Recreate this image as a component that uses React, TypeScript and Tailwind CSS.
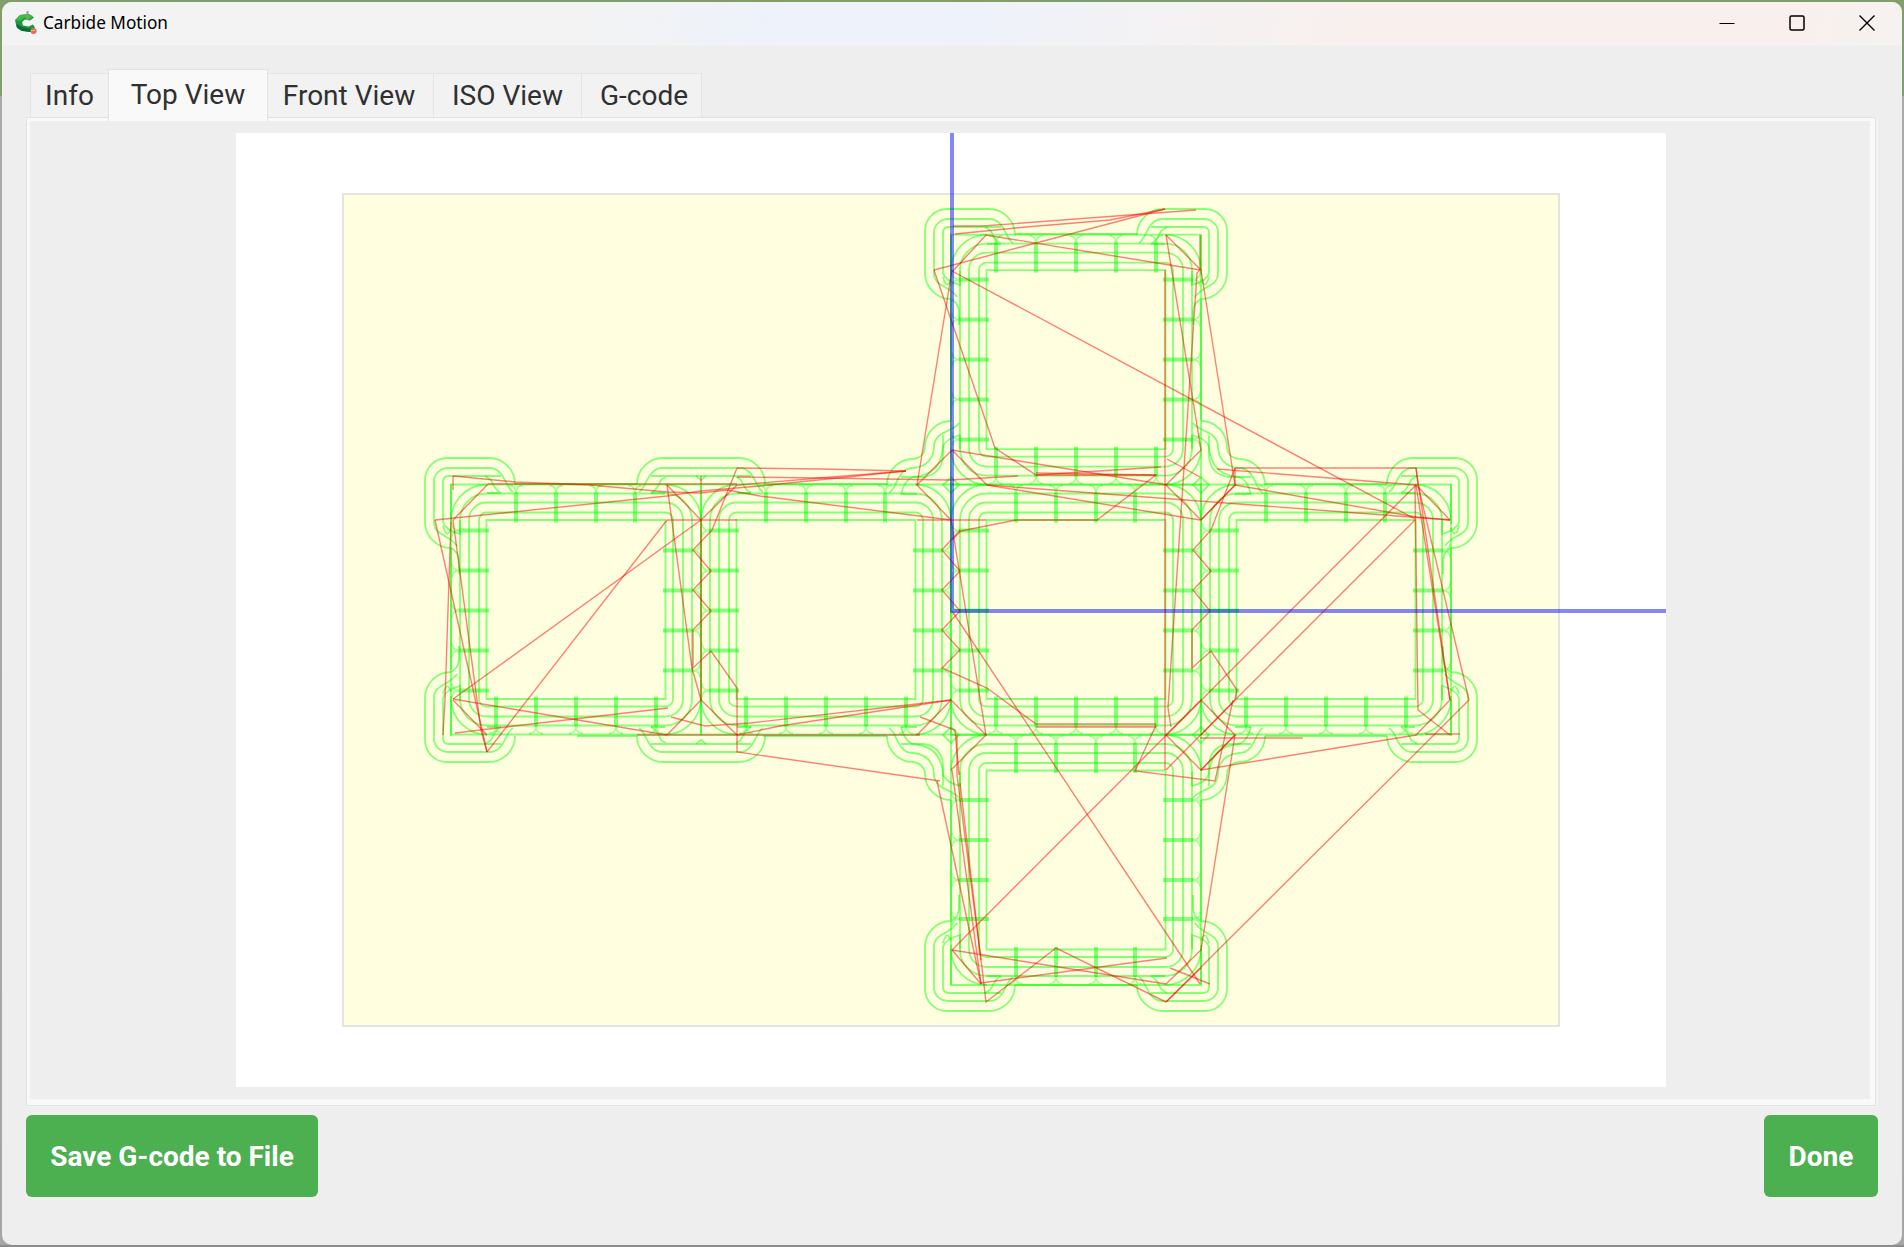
import React from "react";

const GREEN = "#00ff00";
const RED = "#ff0000";
const U = 250;

type Square = { x: number; y: number; top: number[]; right: number[]; bottom: number[]; left: number[] };

const FOUR = [65, 105, 145, 184];
const FIVE = [45, 85, 125, 165, 205];
const SIDE_FOUR = [66, 106, 146, 186];
const SIDE_FIVE = [46, 86, 126, 166, 206];

const squares: Square[] = [
  { x: 951, y: 234.6, top: FIVE, left: FIVE, right: FIVE, bottom: FIVE },
  { x: 451, y: 484.5, top: FOUR, left: SIDE_FIVE, right: SIDE_FOUR, bottom: FIVE },
  { x: 701, y: 484.5, top: FOUR, left: SIDE_FIVE, right: SIDE_FOUR, bottom: FIVE },
  { x: 951, y: 484.5, top: FOUR, left: SIDE_FIVE, right: SIDE_FOUR, bottom: FIVE },
  { x: 1201, y: 484.5, top: FOUR, left: SIDE_FIVE, right: SIDE_FOUR, bottom: FIVE },
  { x: 951, y: 735, top: FOUR, left: FOUR, right: FOUR, bottom: FOUR },
];

const RINGS = [35.5, 28, 18, 9];

function ring(o: number): string {
  const r = 35.5 - o;
  const a = o;
  const b = U - o;
  if (r === 0) return `M${a} ${a}H${b}V${b}H${a}Z`;
  return `M${a + r} ${a}H${b - r}A${r} ${r} 0 0 1 ${b} ${a + r}V${b - r}A${r} ${r} 0 0 1 ${b - r} ${b}H${a + r}A${r} ${r} 0 0 1 ${a} ${b - r}V${a + r}A${r} ${r} 0 0 1 ${a + r} ${a}Z`;
}

const CORNER_ARCS = `M0 36A36 36 0 0 1 36 0M${U - 36} 0A36 36 0 0 1 ${U} 36M${U} ${U - 36}A36 36 0 0 1 ${U - 36} ${U}M36 ${U}A36 36 0 0 1 0 ${U - 36}`;

function Ticks({ at, transform }: { at: number[]; transform?: string }) {
  return (
    <g transform={transform}>
      {at.map((t) => (
        <g key={t}>
          <path d={`M${t} 8V38`} strokeWidth={4} />
          <path d={`M${t - 7} 1Q${t} 1 ${t} 9Q${t} 1 ${t + 7} 1`} strokeOpacity={0.35} />
        </g>
      ))}
    </g>
  );
}

const CONVEX = [
  "M64 0A26 26 0 0 0 38 -26H-4A22 22 0 0 0 -26 -4V38A26 26 0 0 0 0 64L3 66Q8 70 8 78V90",
  "M62 8C54 4 54 -16 38 -16H-3A14 14 0 0 0 -17 -4V38C-17 52 -2 50 6 62",
  "M50 -8H-2Q-8 -8 -8 -2V38Q-6 46 9 50V36",
  "M36 9H50Q44 6 40 -4L34 -8",
  "M-8 42Q-4 56 0 44M0 0V40",
];
const TEE = [
  "M-64 0A26 26 0 0 1 -38 -26H38A26 26 0 0 1 64 0",
  "M-62 8C-54 4 -54 -16 -38 -16H38C54 -16 54 4 62 8",
  "M-50 -8H50M-50 9Q-44 6 -40 -4L-34 -8M50 9Q44 6 40 -4L34 -8",
  "M-50 9H-36M50 9H36M-5 -8L0 -4L5 -8",
];
const CONCAVE = [
  "M-64 0A26 26 0 0 1 -38 -26Q-27 -27 -26 -38A26 26 0 0 1 0 -64",
  "M-62 8C-54 4 -54 -17 -38 -17Q-18 -19 -17 -38C-17 -54 4 -54 8 -62",
  "M-50 9Q-46 -6 -38 -8Q-10 -10 -8 -38Q-6 -46 9 -50",
  "M-50 9H-34M9 -50V-36M-50 -8H-28Q-10 -10 -8 -28V-50",
];

function Marks({ paths, transform }: { paths: string[]; transform: string }) {
  return (
    <g transform={transform}>
      {paths.map((d, i) => (
        <path key={i} d={d} />
      ))}
    </g>
  );
}

// Rapid moves, as flat lists of x,y pairs in canvas coordinates
const rapids: string[] = [
  // top square
  "953,226 983,226 1196,210",
  "955,234 1026,227 1110,220 1165,209",
  "934,270 1165,209",
  "934,270 995,448 1036,475 1156,475 1097,520 1016,520 961,531 952,540",
  "952,272 986,235 1200,270",
  "952,270 917,485",
  "952,271 1415,519",
  "1166,235 1201,450 1166,485 1201,520 1235,485",
  "1166,235 1201,270 1235,485",
  "1200,235 1200,270 1197,273 1168,708 1171,727",
  "1165,270 1165,770",
  "952,450 917,485 951,520",
  "952,450 987,485 1200,520",
  "952,450 1167,485",
  "987,485 1450,520",
  "1167,459 1200,477",
  "1036,475 1161,467",
  "1036,473 1156,475",
  // left square
  "453,476 515,482 590,485 667,492 701,493 727,490 760,496 951,520",
  "453,476 453,490",
  "435,520 667,496 701,491 760,486 906,471",
  "435,520 487,752",
  "453,520 488,484",
  "453,520 481,730 487,752",
  "451,522 450,550 445,700 443,735",
  "488,484 737,484",
  "667,485 701,520 701,700",
  "667,485 692,668 701,700",
  "667,520 737,520",
  "737,485 701,520 453,699",
  "667,520 487,752",
  "453,699 667,735",
  "453,700 487,735",
  "455,733 668,708",
  "701,700 667,735",
  "701,700 737,735",
  "637,735 920,735",
  "671,717 705,726 750,723 951,700",
  "737,735 780,726 951,700",
  "737,468 712,530 693,550 711,571 693,590 711,611 693,630 693,668 711,651 737,688 737,752 940,781",
  "737,468 822,469 906,471",
  "701,476 701,484",
  "737,485 820,478 906,471",
  "737,477 820,478 950,480 1018,476",
  // centre square
  "960,530 942,550 960,571 942,590 960,611 942,630 960,650 942,668 987,688 1036,724 1156,724",
  "951,520 986,735",
  "917,520 986,520",
  "952,611 1200,984",
  "951,700 917,735",
  "951,700 986,735 951,770",
  "920,717 955,730 959,775",
  "1036,727 1156,727",
  "1156,725 1135,771 1215,781 1233,700",
  // right square
  "1235,468 1416,468 1450,700",
  "1235,468 1211,530 1193,550 1211,571 1193,590 1210,611 1192,630 1192,668 1211,651 1237,690 1235,700 1201,735",
  "1235,468 1235,485 1201,520",
  "1217,469 1416,485 1450,520",
  "1235,485 1416,517 1450,520",
  "1416,468 1418,485 1469,700 1166,1002",
  "1416,485 952,950",
  "1415,520 1235,700 1166,770",
  "1416,485 1450,700",
  "1415,485 1418,710 1450,735",
  "1450,700 1416,735 1201,770",
  "1425,734 1460,734",
  "1166,735 1201,770 1235,735",
  "1201,700 1166,735",
  "1201,700 1235,735 1201,770",
  "1200,738 1303,738",
  // bottom square
  "937,781 981,984",
  "957,735 957,775 981,960",
  "952,770 981,984",
  "960,783 986,1002 1056,948 1166,1002",
  "952,950 981,984",
  "952,950 1166,984",
  "981,983 1167,958",
  "1170,968 1210,984",
  "1166,984 1201,950 1235,735",
  "1166,1002 1201,968",
];

function Toolpath() {
  return (
    <svg className="block h-[954px] w-[1430px]" viewBox="236 133 1430 954" fill="none">
      <rect x={343} y={194} width={1216} height={832} fill="#ffffe0" stroke="#e4e4df" strokeWidth={2} />
      <g stroke={GREEN} strokeOpacity={0.48} strokeWidth={1.8}>
        {squares.map((s, i) => (
          <g key={i} transform={`translate(${s.x} ${s.y})`}>
            {RINGS.map((o) => (
              <path key={o} d={ring(o)} />
            ))}
            <path d={CORNER_ARCS} />
            <path d={`M0 0H${U}V${U}H0Z`} />
            <Ticks at={s.top} />
            <Ticks at={s.left} transform="matrix(0 1 1 0 0 0)" />
            <Ticks at={s.bottom} transform="matrix(1 0 0 -1 0 250)" />
            <Ticks at={s.right} transform="matrix(0 1 -1 0 250 0)" />
          </g>
        ))}
        <path d="M515 484H637M763 484H887M1265 484H1387M577 736H637M763 736H887M1265 736H1387M1015 234H1137M1015 985H1137" />
        <path d="M451 548V670M1451 548V670M951 300V420M1201 300V420M951 800V920M1201 800V920" />
        <Marks paths={CONVEX} transform="translate(451 484)" />
        <Marks paths={CONVEX} transform="translate(451 736) scale(1 -1)" />
        <Marks paths={CONVEX} transform="translate(951 235)" />
        <Marks paths={CONVEX} transform="translate(1201 235) scale(-1 1)" />
        <Marks paths={CONVEX} transform="translate(1451 484) scale(-1 1)" />
        <Marks paths={CONVEX} transform="translate(1451 736) scale(-1 -1)" />
        <Marks paths={CONVEX} transform="translate(951 985) scale(1 -1)" />
        <Marks paths={CONVEX} transform="translate(1201 985) scale(-1 -1)" />
        <Marks paths={TEE} transform="translate(701 484)" />
        <Marks paths={TEE} transform="translate(701 736) scale(1 -1)" />
        <Marks paths={CONCAVE} transform="translate(951 485)" />
        <Marks paths={CONCAVE} transform="translate(1201 485) scale(-1 1)" />
        <Marks paths={CONCAVE} transform="translate(951 736) scale(1 -1)" />
        <Marks paths={CONCAVE} transform="translate(1201 736) scale(-1 -1)" />
        {[
          [951, 485],
          [1201, 485],
          [951, 735],
          [1201, 735],
        ].map(([x, y]) => (
          <path key={`${x}-${y}`} d={`M${x - 8} ${y}L${x} ${y - 8}L${x + 8} ${y}L${x} ${y + 8}Z`} />
        ))}
      </g>
      <g stroke={RED} strokeOpacity={0.5} strokeWidth={1.4}>
        {rapids.map((p, i) => (
          <polyline key={i} points={p} />
        ))}
      </g>
      <path d="M952 133V609" stroke="#0000ff" strokeOpacity={0.48} strokeWidth={4} />
      <path d="M950 611H1666" stroke="#0000ff" strokeOpacity={0.48} strokeWidth={4} />
    </svg>
  );
}

function AppIcon() {
  return (
    <svg className="h-[24px] w-[22px]" viewBox="0 0 22 24" fill="none">
      <path d="M12.5 0V8" stroke="#a3a3a3" strokeWidth={2} />
      <path d="M19 6.5L14 3L5 4L0 9L1.500 16L6 19.500L15 21L20 16.500L18 13.500L13.500 15.500L8 14.500L7 11L10 8.500L15 9.500Z" fill="#159a43" />
      <path d="M18 5L13 3L5 4L1 9L5 10L9 7L15 8Z" fill="#46b83f" />
      <path d="M1.500 13L2 17L7 20L15 21L19 17L15 18L7 16Z" fill="#0b6b35" />
      <path d="M12.500 1V9" stroke="#8da08f" strokeWidth={1.500} />
      <circle cx={18.500} cy={20} r={3} fill="#e8694c" />
      <path d="M16 19.500H20" stroke="#f6b29f" strokeWidth={1} />
    </svg>
  );
}

function TitleBar() {
  return (
    <header className="flex h-[43px] items-center justify-between bg-[linear-gradient(100deg,#f3f3f3_0%,#f3f3f3_30%,#edf2fb_41%,#edf2fb_50%,#f3f2f4_60%,#f9f0ed_72%,#f9f0ed_94%,#f5f2ef_100%)] pl-[13px]">
      <div className="flex items-center gap-[6px] pb-[2px]">
        <AppIcon />
        <span className="pt-px font-['Noto_Sans',sans-serif] text-[17.2px] leading-none whitespace-nowrap text-black">Carbide Motion</span>
      </div>
      <div className="flex items-center gap-[54px] pr-[27px] pb-[2px]">
        <svg className="h-4 w-4" viewBox="0 0 16 16" fill="none" stroke="#000" strokeWidth={1.200}>
          <path d="M0.500 8.500H15.500" />
        </svg>
        <svg className="h-4 w-4" viewBox="0 0 16 16" fill="none" stroke="#000" strokeWidth={1.500}>
          <rect x={1} y={1} width={14} height={14} rx={1.500} />
        </svg>
        <svg className="h-4 w-4" viewBox="0 0 16 16" fill="none" stroke="#000" strokeWidth={1.400}>
          <path d="M0.500 0.500L15.500 15.500M15.500 0.500L0.500 15.500" />
        </svg>
      </div>
    </header>
  );
}

const tabs = [
  { label: "Info", box: "w-[78px]" },
  { label: "Top View", box: "w-[160px]", active: true },
  { label: "Front View", box: "w-[166px] pr-[3px]" },
  { label: "ISO View", box: "w-[148px]" },
  { label: "G-code", box: "w-[120px] pl-[5px]" },
];

export default function App() {
  return (
    <div className="h-[1247px] w-[1904px] overflow-hidden bg-[linear-gradient(to_bottom,#809f6c_0px,#809f6c_96px,#aaaaaa_96px,#a6a6a6_1245px,#8c8c8c_1245px)] p-[2px] font-[Roboto,sans-serif]">
      <div className="flex h-[1243px] w-[1900px] flex-col overflow-hidden rounded-[10px] bg-[#eeeeee]">
        <TitleBar />
        <main className="flex flex-1 flex-col px-6 pt-6">
          <nav className="relative z-10 -mb-[4px] flex h-[52px] items-end pl-1">
            {tabs.map((t) => (
              <button
                key={t.label}
                className={`${t.box} ${
                  t.active
                    ? "h-[52px] border-x border-t border-[#e2e2e2] bg-[#f9f9f9] pb-[1px]"
                    : "mb-[4px] h-[44px] border-t border-r border-[#e4e4e4] bg-[#f2f2f2] first:border-r-0 first:border-l"
                } flex items-center justify-center text-[28px] leading-none whitespace-nowrap text-[#303030]`}
              >
                {t.label}
              </button>
            ))}
          </nav>
          <section className="h-[990px] w-[1852px] border-r-2 border-b border-[#f3f3f3]">
            <div className="flex h-full border border-[#e2e2e2]">
              <div className="flex h-full w-full border-t-[3px] border-r-[5px] border-b-[6px] border-l-[3px] border-[#f9f9f9] bg-[#eeeeee] pt-3 pl-[206px]">
                <div className="h-[954px] w-[1430px] bg-white">
                  <Toolpath />
                </div>
              </div>
            </div>
          </section>
          <footer className="flex justify-between pt-[8px]">
            <button className="h-[82px] w-[292px] rounded-[6px] bg-[#4caf50] pt-[2px] text-[28px] font-bold whitespace-nowrap text-white">
              Save G-code to File
            </button>
            <button className="h-[82px] w-[114px] rounded-[6px] bg-[#4caf50] pt-[2px] text-[28px] font-bold text-white">Done</button>
          </footer>
        </main>
      </div>
    </div>
  );
}
